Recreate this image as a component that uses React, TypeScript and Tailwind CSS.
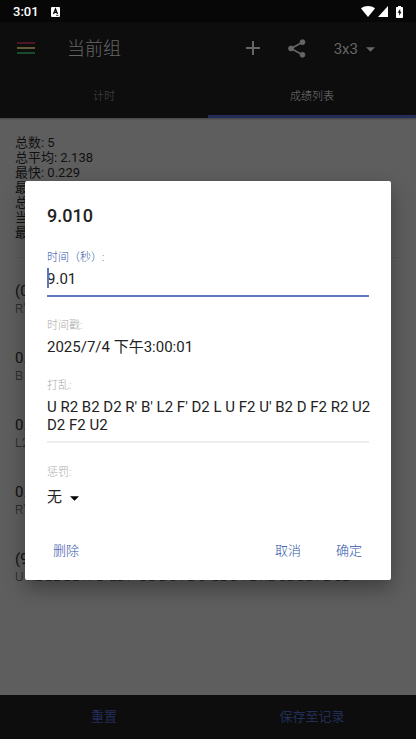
import React, { useState } from 'react';

interface Solve {
  time: string;
  scramble: string;
}

const SCRAMBLE = "U R2 B2 D2 R' B' L2 F' D2 L U F2 U' B2 D F2 R2 U2 D2 F2 U2";

const stats = [
  '总数: 5',
  '总平均: 2.138',
  '最快: 0.229',
  '最慢: 9.010',
  '总标准差: 3.842',
  '当前 5 次平均: 0.484',
  '最佳 5 次平均: 0.484',
];

const solves: Solve[] = [
  { time: '(0.229)', scramble: "R' U2 F2 D2 L2" },
  { time: '0.418', scramble: "B U2 R2 D' F2" },
  { time: '0.502', scramble: 'L2 D2 B2 U R2' },
  { time: '0.531', scramble: "R' F2 U2 L2 D" },
  { time: '(9.010)', scramble: SCRAMBLE },
];

const CaretDown: React.FC<{ className?: string }> = ({ className }) => (
  <svg viewBox="0 0 10 5" className={className} fill="currentColor" aria-hidden="true">
    <path d="M0 0h10L5 5z" />
  </svg>
);

const StatusBar: React.FC = () => (
  <div className="flex h-[22px] items-center bg-[#070707] px-[13px] pt-px text-white">
    <span className="text-[13px] leading-4 font-medium">3:01</span>
    <svg viewBox="0 0 9 10" className="ml-3 h-[10px] w-[9px]" aria-hidden="true">
      <rect width="9" height="10" rx="1" fill="#fff" />
      <path d="M2.5 7l2-5 2 5M3.3 5.4h2.4" fill="none" stroke="#070707" strokeWidth="1.3" />
      <path d="M5 8.4h2.500" stroke="#070707" strokeWidth="0.7" />
    </svg>
    <svg viewBox="0 0 14 11" className="ml-auto h-[11px] w-[14px]" fill="currentColor" aria-hidden="true">
      <path d="M0 2.400C4 -.8 10 -.8 14 2.400L7 11z" />
    </svg>
    <svg viewBox="0 0 10 11" className="ml-[3px] h-[11px] w-[10px]" fill="currentColor" aria-hidden="true">
      <path d="M10 0v11H0z" />
    </svg>
    <svg viewBox="0 0 7 12" className="ml-2 h-3 w-[7px]" aria-hidden="true">
      <path d="M2 0h3v1h1.200q.8 0 .8.8v9.400q0 .8-.8.8H.8q-.8 0-.8-.8V1.800Q0 1 .8 1H2z" fill="#fff" />
      <path d="M4.200 2.800L1.700 6.800h1.500v3L5.500 5.800H4.200z" fill="#070707" />
    </svg>
  </div>
);

const Toolbar: React.FC = () => (
  <div className="flex h-[52px] items-center pl-[17px] pr-[41px] text-[#666]">
    <button aria-label="菜单" className="h-5 w-[18px]">
      <svg viewBox="0 0 18 20" className="h-5 w-[18px]" strokeWidth="2">
        <path d="M0 5h18" stroke="#4d1622" />
        <path d="M0 10h18" stroke="#5f5a33" />
        <path d="M0 15h18" stroke="#174a2e" />
      </svg>
    </button>
    <h1 className="ml-8 pt-0.5 text-[18px] leading-6 font-light">当前组</h1>
    <button aria-label="添加" className="ml-auto">
      <svg viewBox="0 0 14 14" className="h-[14px] w-[14px]" stroke="currentColor" strokeWidth="2">
        <path d="M7 0v14M0 7h14" />
      </svg>
    </button>
    <button aria-label="分享" className="ml-7">
      <svg viewBox="0 0 18 19" className="h-[19px] w-[18px]" fill="currentColor" stroke="currentColor">
        <path d="M14.500 3.200L3 9.500l11.500 6.300" fill="none" strokeWidth="1.700" />
        <circle cx="14.500" cy="3.200" r="2.400" />
        <circle cx="3" cy="9.500" r="2.400" />
        <circle cx="14.500" cy="15.800" r="2.400" />
      </svg>
    </button>
    <button className="ml-7 flex items-center gap-2 pt-0.5 text-[15px] leading-5">
      3x3
      <CaretDown className="h-[5px] w-[9px]" />
    </button>
  </div>
);

const Tabs: React.FC = () => (
  <div className="grid h-11 grid-cols-2 text-[11px] font-light">
    <button className="border-b-[3px] border-transparent pt-1.5 text-[#4a4a4a]">计时</button>
    <button className="border-b-[3px] border-[#222e58] pt-1.5 text-[#777]">成绩列表</button>
  </div>
);

const SolveDialog: React.FC = () => {
  const [time, setTime] = useState('9.01');
  const [scramble, setScramble] = useState(SCRAMBLE);
  const [penalty, setPenalty] = useState('none');

  return (
    <div className="absolute inset-0 flex items-center px-[25px] pt-[22px]">
      <div
        role="dialog"
        aria-labelledby="dialog-title"
        className="w-full rounded-xs bg-white px-[22px] pt-[23px] pb-[17px] text-[15px] text-[#222] shadow-[0_8px_20px_rgba(0,0,0,0.35)]"
      >
        <h2 id="dialog-title" className="text-[18px] leading-6 font-medium">
          9.010
        </h2>

        <label htmlFor="time" className="mt-[22px] block text-[11px] leading-4 font-light text-[#2f54a8]">
          时间（秒）:
        </label>
        <div className="relative">
          <input
            id="time"
            value={time}
            onChange={(e) => setTime(e.target.value)}
            className="block h-[31px] w-full border-b-2 border-[#6079c0] pb-1 outline-none"
          />
          <span className="absolute top-0.5 left-0 h-5 w-0.5 bg-[#5b76bd]" />
        </div>

        <h3 className="mt-[21px] text-[11px] leading-4 font-light text-[#aaa]">时间戳:</h3>
        <p className="mt-px leading-6">2025/7/4 下午3:00:01</p>

        <label htmlFor="scramble" className="mt-[19px] block text-[11px] leading-4 font-light text-[#aaa]">
          打乱:
        </label>
        <div className="mt-1 border-b-2 border-[#eee] pb-[7px]">
          {/* a little wider than the underline so a full row of moves fits */}
          <textarea
            id="scramble"
            rows={2}
            value={scramble}
            onChange={(e) => setScramble(e.target.value)}
            className="block w-[calc(100%+8px)] resize-none overflow-hidden leading-[18px] outline-none"
          />
        </div>

        <label htmlFor="penalty" className="mt-[22px] block text-[11px] leading-4 font-light text-[#aaa]">
          惩罚:
        </label>
        <div className="relative mt-1 h-6 w-8">
          <select
            id="penalty"
            value={penalty}
            onChange={(e) => setPenalty(e.target.value)}
            className="h-6 w-full appearance-none outline-none"
          >
            <option value="none">无</option>
            <option value="+2">+2</option>
            <option value="dnf">DNF</option>
          </select>
          <CaretDown className="pointer-events-none absolute top-[11px] right-0 h-[5px] w-[9px] text-black" />
        </div>

        <div className="mt-[30px] flex pr-[7px] pl-1.5 text-[13px] leading-6 font-light text-[#2f54a8]">
          <button>删除</button>
          <button className="ml-auto">取消</button>
          <button className="ml-[35px]">确定</button>
        </div>
      </div>
    </div>
  );
};

export default function App() {
  return (
    <div className="relative flex min-h-screen flex-col bg-[#5e5e5e] font-[Roboto,'Noto_Sans_CJK_SC',sans-serif] text-[#111]">
      <StatusBar />
      <header className="bg-[#0d0d0d] shadow-[0_1px_2px_rgba(0,0,0,0.3)]">
        <Toolbar />
        <Tabs />
      </header>

      <main className="flex-1 px-[15px] pt-[17px]">
        <div className="border-b border-[#575757] pb-[17px] text-[13px] leading-[15px]">
          {stats.map((line) => (
            <p key={line}>{line}</p>
          ))}
        </div>
        <ul className="pt-[23px]">
          {solves.map((solve) => (
            <li key={solve.time} className="h-[67px]">
              <p className="text-[15px] leading-5">{solve.time}</p>
              <p className="truncate text-[13px] leading-4 font-light text-[#222]">{solve.scramble}</p>
            </li>
          ))}
        </ul>
      </main>

      <footer className="grid h-11 grid-cols-2 bg-[#0d0d0d] text-[13px] text-[#222e58]">
        <button>重置</button>
        <button>保存至记录</button>
      </footer>

      <SolveDialog />
    </div>
  );
}
